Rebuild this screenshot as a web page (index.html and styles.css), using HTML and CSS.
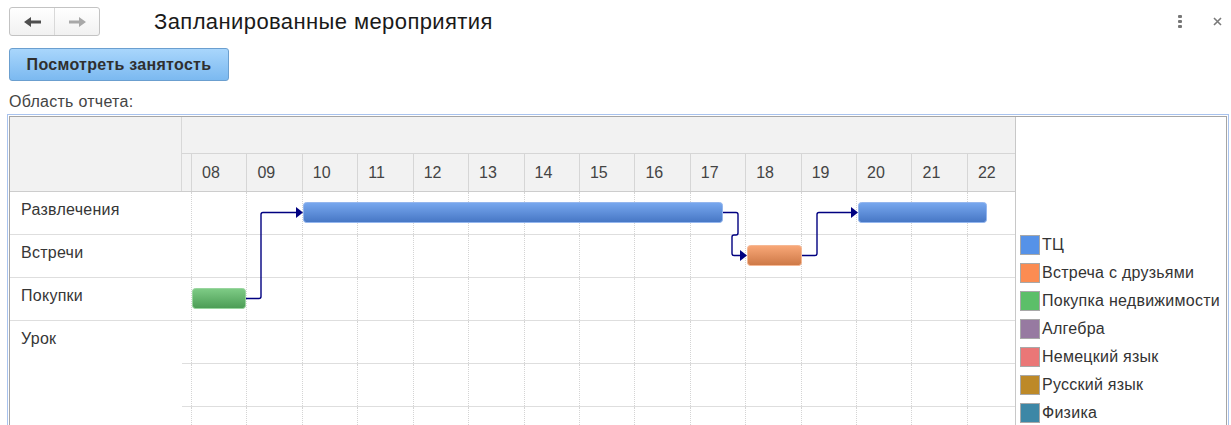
FILE: index.html
```html
<!DOCTYPE html>
<html lang="ru">
<head>
<meta charset="utf-8">
<title>Запланированные мероприятия</title>
<link rel="stylesheet" href="styles.css">
</head>
<body>
<div class="topbar">
  <div class="nav">
    <div class="nav-btn back">
      <svg width="17" height="10" viewBox="0 0 17 10"><path d="M0 5 L7 0 L7 3.5 L17 3.5 L17 6.5 L7 6.5 L7 10 Z" fill="#4f4f4f"/></svg>
    </div>
    <div class="nav-btn fwd">
      <svg width="17" height="10" viewBox="0 0 17 10"><path d="M17 5 L10 0 L10 3.5 L0 3.5 L0 6.5 L10 6.5 L10 10 Z" fill="#a8a8a8"/></svg>
    </div>
  </div>
  <div class="title">Запланированные мероприятия</div>
  <div class="spacer"></div>
  <div class="dots"><span></span><span></span><span></span></div>
  <div class="close">
    <svg width="9" height="9" viewBox="0 0 9 9"><path d="M1 1 L8 8 M8 1 L1 8" stroke="#7a7a7a" stroke-width="1.6"/></svg>
  </div>
</div>

<div class="actions">
  <button class="btn-primary">Посмотреть занятость</button>
</div>

<div class="report-label">Область отчета:</div>

<div class="report">
  <div class="frame">
    <div class="gantt">
      <div class="ghead">
        <div class="lhead"></div>
        <div class="thead">
          <div class="tband"></div>
          <div class="hours">
            <div class="h part"></div>
            <div class="h">08</div><div class="h">09</div><div class="h">10</div><div class="h">11</div>
            <div class="h">12</div><div class="h">13</div><div class="h">14</div><div class="h">15</div>
            <div class="h">16</div><div class="h">17</div><div class="h">18</div><div class="h">19</div>
            <div class="h">20</div><div class="h">21</div><div class="h last">22</div>
          </div>
        </div>
      </div>
      <div class="gbody">
        <div class="labels">
          <div class="lrow">Развлечения</div>
          <div class="lrow">Встречи</div>
          <div class="lrow">Покупки</div>
          <div class="lrow tall">Урок</div>
        </div>
        <div class="timeline">
          <div class="trow"><div class="c part"></div><div class="c"></div><div class="c"></div><div class="c"></div><div class="c"></div><div class="c"></div><div class="c"></div><div class="c"></div><div class="c"></div><div class="c"></div><div class="c"></div><div class="c"></div><div class="c"></div><div class="c"></div><div class="c"></div><div class="c last"></div></div>
          <div class="trow"><div class="c part"></div><div class="c"></div><div class="c"></div><div class="c"></div><div class="c"></div><div class="c"></div><div class="c"></div><div class="c"></div><div class="c"></div><div class="c"></div><div class="c"></div><div class="c"></div><div class="c"></div><div class="c"></div><div class="c"></div><div class="c last"></div></div>
          <div class="trow"><div class="c part"></div><div class="c"></div><div class="c"></div><div class="c"></div><div class="c"></div><div class="c"></div><div class="c"></div><div class="c"></div><div class="c"></div><div class="c"></div><div class="c"></div><div class="c"></div><div class="c"></div><div class="c"></div><div class="c"></div><div class="c last"></div></div>
          <div class="trow"><div class="c part"></div><div class="c"></div><div class="c"></div><div class="c"></div><div class="c"></div><div class="c"></div><div class="c"></div><div class="c"></div><div class="c"></div><div class="c"></div><div class="c"></div><div class="c"></div><div class="c"></div><div class="c"></div><div class="c"></div><div class="c last"></div></div>
          <div class="trow"><div class="c part"></div><div class="c"></div><div class="c"></div><div class="c"></div><div class="c"></div><div class="c"></div><div class="c"></div><div class="c"></div><div class="c"></div><div class="c"></div><div class="c"></div><div class="c"></div><div class="c"></div><div class="c"></div><div class="c"></div><div class="c last"></div></div>
          <div class="trow"><div class="c part"></div><div class="c"></div><div class="c"></div><div class="c"></div><div class="c"></div><div class="c"></div><div class="c"></div><div class="c"></div><div class="c"></div><div class="c"></div><div class="c"></div><div class="c"></div><div class="c"></div><div class="c"></div><div class="c"></div><div class="c last"></div></div>

          <svg class="links" width="833" height="140" viewBox="0 0 833 140">
            <defs>
              <linearGradient id="gBlue" x1="0" y1="0" x2="0" y2="1">
                <stop offset="0" stop-color="#78a8ef"/>
                <stop offset="1" stop-color="#4676c4"/>
              </linearGradient>
              <linearGradient id="gOrange" x1="0" y1="0" x2="0" y2="1">
                <stop offset="0" stop-color="#f9a878"/>
                <stop offset="1" stop-color="#cd7846"/>
              </linearGradient>
              <linearGradient id="gGreen" x1="0" y1="0" x2="0" y2="1">
                <stop offset="0" stop-color="#7fcc86"/>
                <stop offset="1" stop-color="#4b9c55"/>
              </linearGradient>
            </defs>
            <rect x="121.5" y="10.5" width="419" height="20" rx="3" fill="url(#gBlue)" stroke="#94b6ee"/>
            <rect x="676.5" y="10.5" width="128" height="20" rx="3" fill="url(#gBlue)" stroke="#94b6ee"/>
            <rect x="565.5" y="53.5" width="54" height="20" rx="3" fill="url(#gOrange)" stroke="#f6b894"/>
            <rect x="10.5" y="96.5" width="53" height="20" rx="3" fill="url(#gGreen)" stroke="#98d59e"/>

            <g fill="none" stroke="#000080" stroke-width="1.4">
              <path d="M64 106.5 H77 Q79 106.5 79 104.5 V22.5 Q79 20.5 81 20.5 H115"/>
              <path d="M541 20.5 H554 Q556 20.5 556 22.5 V41 Q556 43 554 43 H552 Q550 43 550 45 V61.5 Q550 63.5 552 63.5 H559"/>
              <path d="M620 63.5 H633 Q635 63.5 635 61.5 V22.5 Q635 20.5 637 20.5 H670"/>
            </g>
            <g fill="#000080">
              <polygon points="114,15 121,20.5 114,26"/>
              <polygon points="558,58 565,63.5 558,69"/>
              <polygon points="669,15 676,20.5 669,26"/>
            </g>
          </svg>
        </div>
      </div>
    </div>
    <div class="legend">
      <div class="li"><span class="sw sw-tc"></span><span>ТЦ</span></div>
      <div class="li"><span class="sw sw-meet"></span><span>Встреча с друзьями</span></div>
      <div class="li"><span class="sw sw-buy"></span><span>Покупка недвижимости</span></div>
      <div class="li"><span class="sw sw-alg"></span><span>Алгебра</span></div>
      <div class="li"><span class="sw sw-de"></span><span>Немецкий язык</span></div>
      <div class="li"><span class="sw sw-ru"></span><span>Русский язык</span></div>
      <div class="li"><span class="sw sw-phys"></span><span>Физика</span></div>
    </div>
  </div>
</div>
</body>
</html>
```

FILE: styles.css
```css
html, body {
  margin: 0;
  padding: 0;
}
body {
  width: 1231px;
  height: 425px;
  overflow: hidden;
  background: #fff;
  font-family: "Liberation Sans", Arial, sans-serif;
  color: #333;
}

/* top bar */
.topbar {
  display: flex;
  align-items: center;
  height: 29px;
  padding: 7px 9px 0 9px;
}
.nav {
  display: flex;
  width: 91px;
  height: 29px;
  box-sizing: border-box;
  border: 1px solid #c3c3c3;
  border-radius: 3px;
  background: linear-gradient(#ffffff, #f1f1f1);
}
.nav-btn {
  display: flex;
  align-items: center;
  justify-content: center;
}
.nav-btn.back {
  width: 45px;
  box-sizing: border-box;
  border-right: 1px solid #d9d9d9;
}
.nav-btn.fwd {
  flex: 1;
}
.nav-btn svg {
  display: block;
}
.title {
  margin-left: 54px;
  font-size: 22px;
  letter-spacing: 0.4px;
  color: #1a1a1a;
  white-space: nowrap;
}
.spacer {
  flex: 1;
}
.dots {
  display: flex;
  flex-direction: column;
  gap: 2px;
  width: 4px;
  margin-right: 30px;
}
.dots span {
  display: block;
  width: 4px;
  height: 3px;
  border-radius: 1px;
  background: #777;
}
.close {
  width: 10px;
  display: flex;
  justify-content: center;
}
.close svg {
  display: block;
}

/* action button */
.actions {
  padding: 12px 9px 0 9px;
}
.btn-primary {
  display: block;
  width: 220px;
  height: 33px;
  margin: 0;
  padding: 0;
  box-sizing: border-box;
  border: 1px solid #6b9fcf;
  border-radius: 3px;
  background: linear-gradient(#a9d6fc, #7bb9f0);
  font-family: "Liberation Sans", Arial, sans-serif;
  font-size: 16px;
  letter-spacing: 0.3px;
  font-weight: bold;
  color: #2f2f2f;
}

.report-label {
  margin: 12px 9px 0 9px;
  font-size: 16px;
  letter-spacing: 0.27px;
  line-height: 18px;
  color: #444;
}

/* report area */
.report {
  margin: 3px 2px 0 7px;
  border: 1px solid #a9c3ee;
  padding: 1px;
}
.frame {
  display: flex;
  height: 400px;
  border: 1px solid #a6a6a6;
}
.gantt {
  width: 1006px;
  box-sizing: border-box;
  border-right: 1px solid #c8c8c8;
  display: flex;
  flex-direction: column;
}
.ghead {
  display: flex;
  height: 75px;
  box-sizing: border-box;
  border-bottom: 1px solid #cdcdcd;
}
.lhead {
  width: 172px;
  box-sizing: border-box;
  background: #f2f2f2;
  border-right: 1px solid #d8d8d8;
}
.thead {
  flex: 1;
  display: flex;
  flex-direction: column;
}
.tband {
  height: 37px;
  box-sizing: border-box;
  background: #f2f2f2;
  border-bottom: 1px solid #d6d6d6;
}
.hours {
  display: flex;
  flex: 1;
}
.h {
  flex: none;
  width: 55.43px;
  box-sizing: border-box;
  border-right: 1px solid #d6d6d6;
  background: #f2f2f2;
  padding-left: 10px;
  font-size: 16px;
  line-height: 37px;
  color: #444;
}
.h.part {
  width: 10px;
  padding: 0;
}
.h.last {
  flex: 1;
  width: auto;
  border-right: none;
}

.gbody {
  display: flex;
  flex: 1;
}
.labels {
  width: 172px;
  display: flex;
  flex-direction: column;
}
.lrow {
  height: 43px;
  box-sizing: border-box;
  border-bottom: 1px solid #dedede;
  padding: 9px 0 0 11px;
  font-size: 16px;
  letter-spacing: 0.27px;
  line-height: 18px;
  color: #363636;
}
.lrow.tall {
  flex: 1;
  border-bottom: none;
}
.timeline {
  flex: 1;
  position: relative;
  overflow: hidden;
}
.trow {
  display: flex;
  height: 43px;
  box-sizing: border-box;
  border-bottom: 1px solid #dedede;
}
.c {
  flex: none;
  width: 55.43px;
  box-sizing: border-box;
  border-right: 1px dotted #d4d4d4;
}
.c.part {
  width: 10px;
}
.c.last {
  flex: 1;
  width: auto;
  border-right: none;
}
.links {
  position: absolute;
  left: 0;
  top: 0;
  pointer-events: none;
}

/* legend */
.legend {
  flex: 1;
  min-width: 0;
  padding: 114px 0 0 4px;
  display: flex;
  flex-direction: column;
}
.li {
  display: flex;
  align-items: center;
  gap: 2px;
  height: 28px;
  font-size: 16px;
  letter-spacing: 0.25px;
  color: #333;
  white-space: nowrap;
  overflow: hidden;
}
.sw {
  flex: none;
  width: 20px;
  height: 20px;
  box-sizing: border-box;
  border: 1px solid #a8a8a8;
}
.sw-tc { background: #5692e8; }
.sw-meet { background: #fb8c52; }
.sw-buy { background: #5cbf69; }
.sw-alg { background: #977aa1; }
.sw-de { background: #ea7777; }
.sw-ru { background: #bd8928; }
.sw-phys { background: #3d87a6; }
```
